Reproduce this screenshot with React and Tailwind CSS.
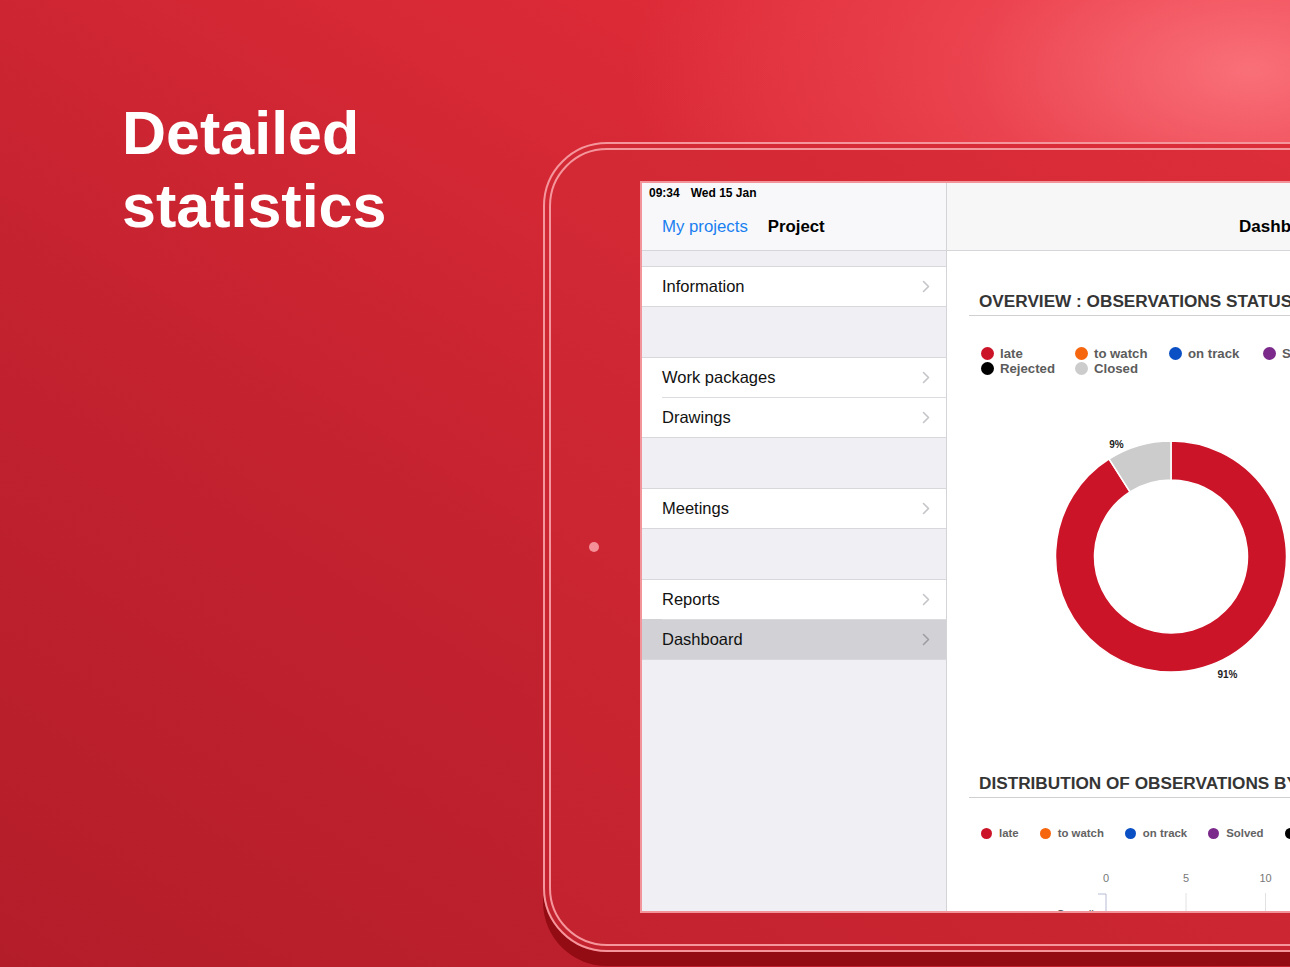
import React from "react";

const groups = [
  [{ label: "Information" }],
  [{ label: "Work packages" }, { label: "Drawings" }],
  [{ label: "Meetings" }],
  [{ label: "Reports" }, { label: "Dashboard", active: true }],
];

const statusLegend = [
  { label: "late", color: "bg-[#cc1428]" },
  { label: "to watch", color: "bg-[#f5660f]" },
  { label: "on track", color: "bg-[#0a4fc4]" },
  { label: "Solved", color: "bg-[#7b2a8c]" },
  { label: "Rejected", color: "bg-black" },
  { label: "Closed", color: "bg-[#cccccc]" },
];

const distLegend = [
  { label: "late", color: "bg-[#cc1428]" },
  { label: "to watch", color: "bg-[#f5660f]" },
  { label: "on track", color: "bg-[#0a4fc4]" },
  { label: "Solved", color: "bg-[#7b2a8c]" },
  { label: "Rejected", color: "bg-black" },
];

function Chevron({ color = "#c4c4c9" }) {
  return (
    <svg width="8" height="13" viewBox="0 0 8 13" fill="none">
      <path d="M1.5 1.5L6.5 6.5L1.5 11.5" stroke={color} strokeWidth="1.6" strokeLinecap="round" strokeLinejoin="round" />
    </svg>
  );
}

function Sidebar() {
  return (
    <div className="w-[305px] shrink-0 h-full bg-[#efeff4] border-r border-[#d4d4d8] flex flex-col">
      <div className="h-[68px] bg-[#f8f8fa] border-b border-[#d6d6da] flex flex-col">
        <div className="h-[20px] pl-[7px] flex items-center text-[12px] font-semibold text-black">
          <span>09:34</span>
          <span className="ml-[11px]">Wed 15 Jan</span>
        </div>
        <div className="flex-1 flex items-center pl-[20px] text-[16.8px]">
          <span className="text-[#1a7ff0]">My projects</span>
          <span className="ml-[20px] font-bold text-black">Project</span>
        </div>
      </div>

      {groups.map((g, gi) => (
        <div key={gi} className={`${gi === 0 ? "mt-[15px]" : "mt-[50px]"} bg-white border-y border-[#d8d8dc]`}>
          {g.map((r, i) => (
            <div key={r.label} className={r.active ? "bg-[#d1d1d6]" : "bg-white"}>
              {i > 0 && <div className="ml-[20px] h-px bg-[#dcdce0]" />}
              <div className="h-[39px] pl-[20px] pr-[16px] flex items-center justify-between">
                <span className="text-[16.5px] text-[#111]">{r.label}</span>
                <Chevron color={r.active ? "#9d9da3" : "#c4c4c9"} />
              </div>
            </div>
          ))}
        </div>
      ))}
    </div>
  );
}

function Donut() {
  return (
    <svg width="280" height="262" viewBox="0 0 280 262" className="ml-[62px] mt-[50px]">
      <path
        d="M140 15 A115.5 115.5 0 1 1 78.11 32.98 L99.01 65.91 A76.5 76.5 0 1 0 140 54 Z"
        fill="#cc1428"
        stroke="#fff"
        strokeWidth="1.5"
      />
      <path
        d="M78.11 32.98 A115.5 115.5 0 0 1 140 15 L140 54 A76.5 76.5 0 0 0 99.01 65.91 Z"
        fill="#cccccc"
        stroke="#fff"
        strokeWidth="1.5"
      />
      <text x="85.5" y="21.5" textAnchor="middle" fontSize="10" fontWeight="700" fill="#222">9%</text>
      <text x="196.5" y="251.5" textAnchor="middle" fontSize="10" fontWeight="700" fill="#222">91%</text>
    </svg>
  );
}

function Axis() {
  return (
    <svg width="600" height="60" viewBox="0 0 600 60" className="mt-[25px]">
      <g fontSize="11" fill="#777" textAnchor="middle">
        <text x="137" y="17">0</text>
        <text x="217" y="17">5</text>
        <text x="296.5" y="17">10</text>
        <text x="376" y="17">15</text>
      </g>
      <path d="M129 29H137V60" stroke="#b7bbd6" strokeWidth="1" fill="none" />
      <path d="M217 28V60M296.5 28V60M376 28V60" stroke="#e2e2e2" strokeWidth="1" />
      <text x="125" y="54" textAnchor="end" fontSize="12" fill="#555">Overall</text>
    </svg>
  );
}

function Detail() {
  return (
    <div className="flex-1 h-full bg-white flex flex-col">
      <div className="h-[68px] shrink-0 bg-[#f7f7f7] border-b border-[#d6d6da] flex flex-col">
        <div className="h-[20px]" />
        <div className="flex-1 flex items-center justify-center text-[17px] font-bold text-black">Dashboard</div>
      </div>

      <div className="pl-[22px] pr-[22px] flex flex-col">
        <h2 className="mt-[40px] pl-[10px] pb-[4px] border-b border-[#d0d0d0] text-[17.2px] leading-[20px] font-bold text-[#353535] whitespace-nowrap">
          OVERVIEW : OBSERVATIONS STATUS
        </h2>
        <div className="mt-[30px] ml-[12px] grid grid-cols-[94px_94px_94px_94px] text-[13.2px] leading-[15px] font-bold text-[#5c5c5c]">
          {statusLegend.map((l) => (
            <div key={l.label} className="h-[15px] flex items-center gap-[6px] whitespace-nowrap">
              <span className={`w-[13px] h-[13px] rounded-full shrink-0 ${l.color}`} />
              <span>{l.label}</span>
            </div>
          ))}
        </div>

        <Donut />

        <h2 className="mt-[85px] pl-[10px] pb-[4px] border-b border-[#d0d0d0] text-[17.2px] leading-[20px] font-bold text-[#353535] whitespace-nowrap">
          DISTRIBUTION OF OBSERVATIONS BY STATUS
        </h2>
        <div className="mt-[28px] ml-[12px] flex items-center gap-[21px] text-[11.4px] leading-[14px] font-bold text-[#636363]">
          {distLegend.map((l) => (
            <div key={l.label} className="h-[14px] flex items-center gap-[7px] whitespace-nowrap">
              <span className={`w-[11px] h-[11px] rounded-full shrink-0 ${l.color}`} />
              <span>{l.label}</span>
            </div>
          ))}
        </div>

        <Axis />
      </div>
    </div>
  );
}

export default function App() {
  return (
    <div className="flex items-start w-[1290px] h-[967px] overflow-hidden font-['Liberation_Sans',Arial,sans-serif] bg-[image:radial-gradient(ellipse_620px_330px_at_1250px_70px,rgba(255,130,138,0.78)_0%,rgba(250,100,110,0.4)_45%,rgba(240,70,80,0)_100%),linear-gradient(32deg,#b31d29_0%,#c4222f_40%,#dc2a37_75%,#e6303d_100%)]">
      <div className="w-[543px] shrink-0 pl-[122px] pt-[97px]">
        <h1 className="text-[61px] leading-[73px] font-bold text-white">
          Detailed
          <br />
          statistics
        </h1>
      </div>

      <div className="mt-[142px] w-[1200px] shrink-0 rounded-[64px] border-2 border-[#f5969c] p-[4px] bg-[image:linear-gradient(32deg,#c2222e_0%,#d02834_45%,#e2303c_100%)] shadow-[0_14px_0_#930b13]">
        <div className="rounded-[58px] border-2 border-[#f5969c] flex items-center pl-[38px] pt-[31px] pb-[31px]">
          <span className="w-[10px] h-[10px] rounded-full bg-[#f49098] shrink-0" />
          <div className="ml-[41px] w-[982px] h-[732px] shrink-0 border-2 border-[#f3939a] bg-white flex overflow-hidden">
            <Sidebar />
            <Detail />
          </div>
        </div>
      </div>
    </div>
  );
}
